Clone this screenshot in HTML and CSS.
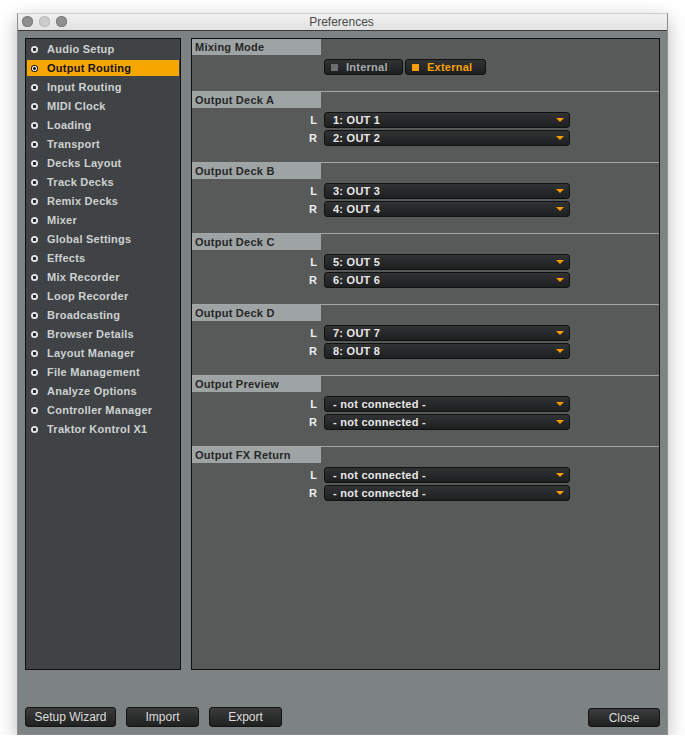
FILE: index.html
```html
<!DOCTYPE html>
<html>
<head>
	<title>Preferences</title>
	<link rel="stylesheet" href="styles.css">
</head>
<body>
<div class="window">
	<div class="titlebar">
		<div class="lights">
			<span class="light"></span>
			<span class="light light-mid"></span>
			<span class="light"></span>
		</div>
		<div class="title">Preferences</div>
	</div>
	<div class="content">
		<div class="panels">
			<!-- Category list -->
			<ul class="sidebar">
				<li class="cat"><span class="bullet"></span>Audio Setup</li>
				<li class="cat selected"><span class="bullet"></span>Output Routing</li>
				<li class="cat"><span class="bullet"></span>Input Routing</li>
				<li class="cat"><span class="bullet"></span>MIDI Clock</li>
				<li class="cat"><span class="bullet"></span>Loading</li>
				<li class="cat"><span class="bullet"></span>Transport</li>
				<li class="cat"><span class="bullet"></span>Decks Layout</li>
				<li class="cat"><span class="bullet"></span>Track Decks</li>
				<li class="cat"><span class="bullet"></span>Remix Decks</li>
				<li class="cat"><span class="bullet"></span>Mixer</li>
				<li class="cat"><span class="bullet"></span>Global Settings</li>
				<li class="cat"><span class="bullet"></span>Effects</li>
				<li class="cat"><span class="bullet"></span>Mix Recorder</li>
				<li class="cat"><span class="bullet"></span>Loop Recorder</li>
				<li class="cat"><span class="bullet"></span>Broadcasting</li>
				<li class="cat"><span class="bullet"></span>Browser Details</li>
				<li class="cat"><span class="bullet"></span>Layout Manager</li>
				<li class="cat"><span class="bullet"></span>File Management</li>
				<li class="cat"><span class="bullet"></span>Analyze Options</li>
				<li class="cat"><span class="bullet"></span>Controller Manager</li>
				<li class="cat"><span class="bullet"></span>Traktor Kontrol X1</li>
			</ul>

			<!-- Settings panel -->
			<div class="main">
				<div class="section first">
					<div class="section-head">Mixing Mode</div>
					<div class="row">
						<div class="row-label"></div>
						<div class="toggle">
							<span class="toggle-btn"><span class="led"></span>Internal</span>
							<span class="toggle-btn on"><span class="led"></span>External</span>
						</div>
					</div>
				</div>

				<div class="section">
					<div class="section-head">Output Deck A</div>
					<div class="row"><div class="row-label">L</div><div class="select">1: OUT 1</div></div>
					<div class="row"><div class="row-label">R</div><div class="select">2: OUT 2</div></div>
				</div>

				<div class="section">
					<div class="section-head">Output Deck B</div>
					<div class="row"><div class="row-label">L</div><div class="select">3: OUT 3</div></div>
					<div class="row"><div class="row-label">R</div><div class="select">4: OUT 4</div></div>
				</div>

				<div class="section">
					<div class="section-head">Output Deck C</div>
					<div class="row"><div class="row-label">L</div><div class="select">5: OUT 5</div></div>
					<div class="row"><div class="row-label">R</div><div class="select">6: OUT 6</div></div>
				</div>

				<div class="section">
					<div class="section-head">Output Deck D</div>
					<div class="row"><div class="row-label">L</div><div class="select">7: OUT 7</div></div>
					<div class="row"><div class="row-label">R</div><div class="select">8: OUT 8</div></div>
				</div>

				<div class="section">
					<div class="section-head">Output Preview</div>
					<div class="row"><div class="row-label">L</div><div class="select">- not connected -</div></div>
					<div class="row"><div class="row-label">R</div><div class="select">- not connected -</div></div>
				</div>

				<div class="section">
					<div class="section-head">Output FX Return</div>
					<div class="row"><div class="row-label">L</div><div class="select">- not connected -</div></div>
					<div class="row"><div class="row-label">R</div><div class="select">- not connected -</div></div>
				</div>
			</div>
		</div>

		<div class="footer">
			<button class="btn btn-wizard">Setup Wizard</button>
			<button class="btn btn-small">Import</button>
			<button class="btn btn-small">Export</button>
			<button class="btn btn-close">Close</button>
		</div>
	</div>
</div>
</body>
</html>
```

FILE: styles.css
```css
		body {
			margin: 0;
			background-color: #ffffff;
			font-family: "Liberation Sans", Arial, sans-serif;
		}
		/* Window frame */
		.window {
			width: 649px;
			margin: 13px 0 0 17px;
			border: 1px solid #8c8c8c;
			border-top-color: #cfcfcf;
			box-shadow: 0 6px 18px rgba(0,0,0,0.28);
		}
		.titlebar {
			height: 16px;
			background: linear-gradient(#f0f0f0, #e2e2e2);
			border-bottom: 1px solid #3a3c3c;
			display: flex;
			align-items: center;
		}
		.lights {
			display: flex;
			gap: 6px;
			padding-left: 4px;
			margin-top: -1px;
		}
		.light {
			width: 11px;
			height: 11px;
			border-radius: 50%;
			background-color: #8f8f8f;
			box-shadow: inset 0 0 0 1px #7d7d7d;
		}
		.light-mid {
			background-color: #cdcdcd;
			box-shadow: inset 0 0 0 1px #bcbcbc;
		}
		.title {
			flex: 1;
			text-align: center;
			font-size: 12px;
			color: #4a4a4a;
			margin-left: -51px;
		}
		/* Content area */
		.content {
			background-color: #7d8382;
			padding: 7px;
		}
		.panels {
			display: flex;
			gap: 10px;
			height: 632px;
		}
		/* Category list styling */
		.sidebar {
			list-style: none;
			margin: 0;
			padding: 2px 1px 0 1px;
			width: 152px;
			background-color: #3f4345;
			border: 1px solid #0f1010;
		}
		.cat {
			height: 16px;
			margin-bottom: 3px;
			display: flex;
			align-items: center;
			padding-left: 4px;
			font-size: 11px;
			font-weight: bold;
			letter-spacing: 0.25px;
			color: #cdd1d1;
		}
		.bullet {
			width: 7px;
			height: 7px;
			border-radius: 50%;
			margin-right: 9px;
			background: radial-gradient(circle, #2b2d2e 0 1.5px, #e4e6e6 2px);
		}
		.cat.selected {
			background-color: #f7a600;
			color: #111111;
		}
		.selected .bullet {
			background: radial-gradient(circle, #1a1a1a 0 1.2px, #e8e8e8 1.7px 2.4px, #1a1a1a 2.9px);
		}
		/* Settings panel styling */
		.main {
			flex: 1;
			background-color: #585a5a;
			border: 1px solid #0f1010;
		}
		.section {
			border-top: 1px solid #a1a6a6;
			padding-bottom: 16px;
		}
		.section.first {
			border-top: none;
		}
		.section-head {
			width: 126px;
			height: 16px;
			line-height: 16px;
			padding-left: 3px;
			margin-bottom: 4px;
			background-color: #9ea3a3;
			color: #262828;
			font-size: 11px;
			font-weight: bold;
			letter-spacing: 0.25px;
		}
		.row {
			display: flex;
			align-items: center;
			margin-bottom: 2px;
		}
		.row:last-child {
			margin-bottom: 0;
		}
		.row-label {
			width: 125px;
			padding-right: 7px;
			text-align: right;
			color: #eeeeee;
			font-size: 11px;
			font-weight: bold;
		}
		.select {
			width: 236px;
			height: 14px;
			line-height: 14px;
			padding-left: 8px;
			border: 1px solid #101111;
			border-radius: 3px;
			background: linear-gradient(#313233, #1e1f20);
			color: #e8e8e8;
			font-size: 11px;
			font-weight: bold;
			letter-spacing: 0.25px;
			position: relative;
		}
		.select::after {
			content: "";
			position: absolute;
			right: 5px;
			top: 5px;
			border-left: 4px solid transparent;
			border-right: 4px solid transparent;
			border-top: 4px solid #f79b00;
		}
		/* Mixing mode toggle */
		.toggle {
			display: flex;
			gap: 2px;
		}
		.toggle-btn {
			height: 14px;
			display: flex;
			align-items: center;
			padding-left: 6px;
			border: 1px solid #101111;
			border-radius: 3px;
			background: linear-gradient(#313233, #1e1f20);
			color: #a8abab;
			font-size: 11px;
			font-weight: bold;
			letter-spacing: 0.25px;
			width: 71px;
		}
		.toggle-btn.on {
			width: 73px;
			color: #f7a300;
		}
		.led {
			width: 7px;
			height: 7px;
			margin-right: 8px;
			background-color: #6d6e6e;
		}
		.on .led {
			background-color: #f79d00;
		}
		/* Footer buttons */
		.footer {
			display: flex;
			gap: 10px;
			margin-top: 37px;
			height: 20px;
		}
		.btn {
			height: 20px;
			padding: 0;
			border: 1px solid #121313;
			border-radius: 3px;
			background: linear-gradient(#3a3b3c, #1f2020);
			color: #dcdcdc;
			font-family: "Liberation Sans", Arial, sans-serif;
			font-size: 12px;
			cursor: pointer;
		}
		.btn-wizard {
			width: 91px;
		}
		.btn-small {
			width: 73px;
		}
		.btn-close {
			width: 72px;
			margin-left: auto;
			margin-top: 1px;
			height: 19px;
		}
```
